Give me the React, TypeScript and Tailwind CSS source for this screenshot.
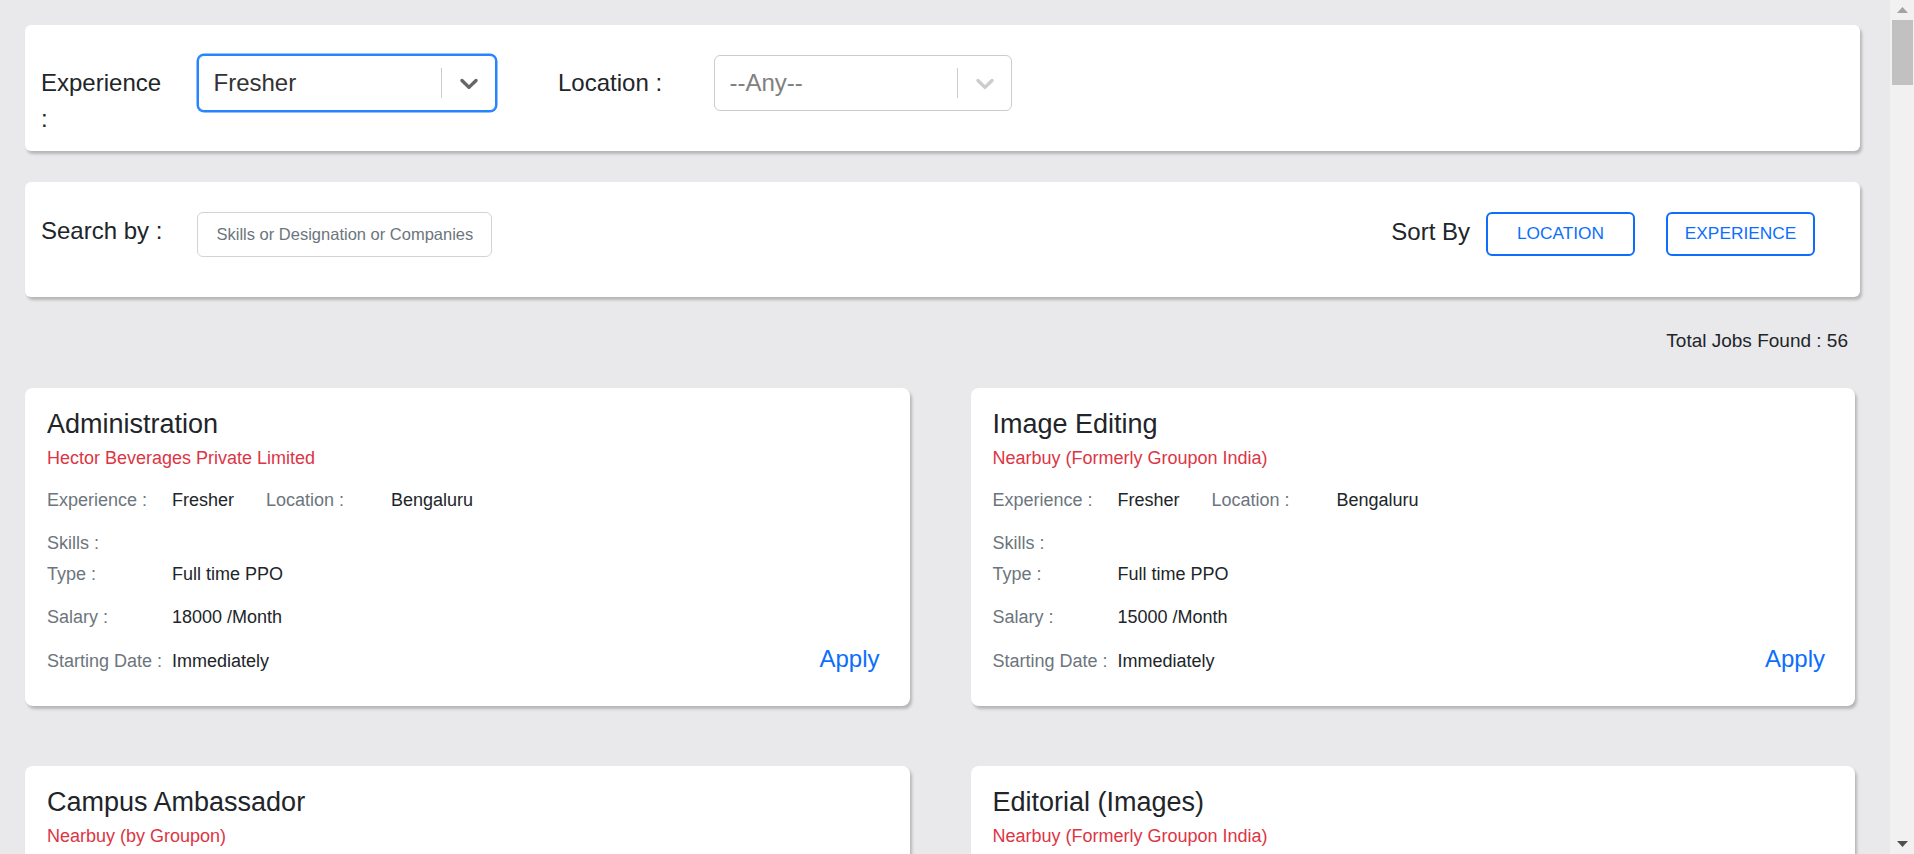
type Job = {
  title: string;
  company: string;
  experience: string;
  location: string;
  skills: string;
  type: string;
  salary: string;
  start: string;
};

const BASE_JOBS: Job[] = [
  { title: 'Administration', company: 'Hector Beverages Private Limited', experience: 'Fresher', location: 'Bengaluru', skills: '', type: 'Full time PPO', salary: '18000 /Month', start: 'Immediately' },
  { title: 'Image Editing', company: 'Nearbuy (Formerly Groupon India)', experience: 'Fresher', location: 'Bengaluru', skills: '', type: 'Full time PPO', salary: '15000 /Month', start: 'Immediately' },
  { title: 'Campus Ambassador', company: 'Nearbuy (by Groupon)', experience: 'Fresher', location: 'Gurgaon', skills: '', type: 'Internship', salary: '5000 /Month', start: 'Immediately' },
  { title: 'Editorial (Images)', company: 'Nearbuy (Formerly Groupon India)', experience: 'Fresher', location: 'Gurgaon', skills: '', type: 'Full time PPO', salary: '15000 /Month', start: 'Immediately' },
  { title: 'Business Development', company: 'Hector Beverages Private Limited', experience: 'Fresher', location: 'Mumbai', skills: '', type: 'Full time PPO', salary: '20000 /Month', start: 'Immediately' },
  { title: 'Content Writing', company: 'Nearbuy (by Groupon)', experience: 'Fresher', location: 'Delhi', skills: '', type: 'Internship', salary: '8000 /Month', start: 'Immediately' },
];

const JOBS: Job[] = Array.from({ length: 56 }, (_, i) => BASE_JOBS[i % BASE_JOBS.length]);

function Chevron({ color }: { color: string }) {
  return (
    <svg width="30" height="30" viewBox="0 0 20 20" fill={color}>
      <path d="M4.516 7.548c0.436-0.446 1.043-0.481 1.576 0l3.908 3.747 3.908-3.747c0.533-0.481 1.141-0.446 1.574 0 0.436 0.445 0.408 1.197 0 1.615-0.406 0.418-4.695 4.502-4.695 4.502-0.217 0.223-0.502 0.335-0.787 0.335s-0.57-0.112-0.789-0.335c0 0-4.287-4.084-4.695-4.502s-0.436-1.17 0-1.615z" />
    </svg>
  );
}

function Select({ text, focused }: { text: string; focused?: boolean }) {
  return (
    <div
      className={
        focused
          ? 'mt-[2px] flex h-[56px] w-[298px] rounded-[6px] border-[1.5px] border-[#2684ff] bg-white shadow-[0_0_0_1.5px_#2684ff]'
          : 'mt-[2px] flex h-[56px] w-[298px] rounded-[6px] border-[1.5px] border-[#cccccc] bg-white'
      }
    >
      <div
        className={
          focused
            ? 'flex w-[241.5px] items-center pl-[14.5px] text-[24px] text-[#333333]'
            : 'flex w-[241.5px] items-center pl-[14.5px] text-[24px] text-[#808080]'
        }
      >
        {text}
      </div>
      <span className="h-[30px] w-[1.5px] self-center bg-[#cccccc]" />
      <div className="flex flex-1 items-center justify-center">
        <Chevron color={focused ? '#666666' : '#cccccc'} />
      </div>
    </div>
  );
}

function Row({ label, value, mb }: { label: string; value: string; mb: string }) {
  return (
    <div className={`flex text-[18px] leading-[27px] ${mb}`}>
      <span className="w-[125px] text-[#6c757d]">{label}</span>
      <span className="text-[#212529]">{value}</span>
    </div>
  );
}

function JobCard({ job }: { job: Job }) {
  return (
    <div className="rounded-[8px] bg-white pt-[20px] pr-[30px] pb-[31px] pl-[22px] shadow-[2px_3px_3px_rgba(0,0,0,0.22)]">
      <h5 className="text-[27px] leading-[32.4px] text-[#212529]">{job.title}</h5>
      <div className="mt-[5.4px] text-[18px] leading-[27px] text-[#dc3545]">{job.company}</div>

      <div className="mt-[14.75px] mb-[16px] flex text-[18px] leading-[27px]">
        <span className="w-[125px] text-[#6c757d]">Experience :</span>
        <span className="w-[94px] text-[#212529]">{job.experience}</span>
        <span className="w-[125px] text-[#6c757d]">Location :</span>
        <span className="text-[#212529]">{job.location}</span>
      </div>
      <Row label="Skills :" value={job.skills} mb="mb-[4px]" />
      <Row label="Type :" value={job.type} mb="mb-[16.3px]" />
      <Row label="Salary :" value={job.salary} mb="mb-[15.3px]" />

      <div className="flex items-baseline text-[18px] leading-[27px]">
        <span className="w-[125px] text-[#6c757d]">Starting Date :</span>
        <span className="text-[#212529]">{job.start}</span>
        <button className="ml-auto text-[24px] leading-[23px] text-[#0d6efd]">Apply</button>
      </div>
    </div>
  );
}

function Scrollbar() {
  return (
    <div className="flex h-screen w-[24px] shrink-0 flex-col bg-[#f1f1f1]">
      <div className="flex h-[20px] items-center justify-center">
        <svg width="11" height="6" viewBox="0 0 11 6">
          <path d="M5.5 0 11 6H0z" fill="#a3a3a3" />
        </svg>
      </div>
      <div className="ml-[2px] mr-[1px] h-[65px] bg-[#c1c1c1]" />
      <div className="flex-1" />
      <div className="flex h-[20px] items-center justify-center">
        <svg width="11" height="6" viewBox="0 0 11 6">
          <path d="M0 0h11L5.5 6z" fill="#505050" />
        </svg>
      </div>
    </div>
  );
}

export default function App() {
  return (
    <div className="flex h-screen overflow-hidden bg-[#e9e9eb] font-['Liberation_Sans',Arial,sans-serif] text-[#212529]">
      <main className="min-w-0 flex-1 overflow-hidden">
        <div className="pt-[25px] pr-[30px] pb-[40px] pl-[25px]">
          {/* filters */}
          <div className="flex items-start rounded-[6px] bg-white pt-[28px] pb-[14px] pl-[16px] shadow-[2px_3px_3px_rgba(0,0,0,0.22)]">
            <div className="mr-[35px] w-[122px] pt-[12px] text-[24px] leading-[36px]">Experience :</div>
            <Select text="Fresher" focused />
            <div className="ml-[62px] w-[156px] pt-[12px] text-[24px] leading-[36px]">Location :</div>
            <Select text="--Any--" />
          </div>

          {/* search + sort */}
          <div className="mt-[31px] flex items-start rounded-[6px] bg-white pt-[30px] pr-[45px] pb-[40px] pl-[16px] shadow-[2px_3px_3px_rgba(0,0,0,0.22)]">
            <div className="mt-[1px] w-[156px] text-[24px] leading-[36px]">Search by :</div>
            <input
              type="text"
              placeholder="Skills or Designation or Companies"
              className="h-[45px] w-[295px] rounded-[6px] border-[1.5px] border-[#ced4da] px-[18.5px] text-[16.5px] outline-none placeholder:text-[#6c757d]"
            />
            <div className="ml-auto flex items-start">
              <span className="mt-[2px] mr-[16px] text-[24px] leading-[36px]">Sort By</span>
              <button className="h-[44px] w-[149px] rounded-[6px] border-2 border-[#0d6efd] text-[17.3px] text-[#0d6efd]">
                LOCATION
              </button>
              <button className="ml-[31px] h-[44px] w-[149px] rounded-[6px] border-2 border-[#0d6efd] text-[17.3px] text-[#0d6efd]">
                EXPERIENCE
              </button>
            </div>
          </div>

          <div className="mt-[30px] pr-[12px] text-right text-[19px] leading-[28.5px]">Total Jobs Found : 56</div>

          {/* job list */}
          <div className="mt-[32px] mr-[5px] grid grid-cols-2 gap-x-[61px] gap-y-[60px]">
            {JOBS.map((job, i) => (
              <JobCard key={i} job={job} />
            ))}
          </div>
        </div>
      </main>
      <Scrollbar />
    </div>
  );
}
